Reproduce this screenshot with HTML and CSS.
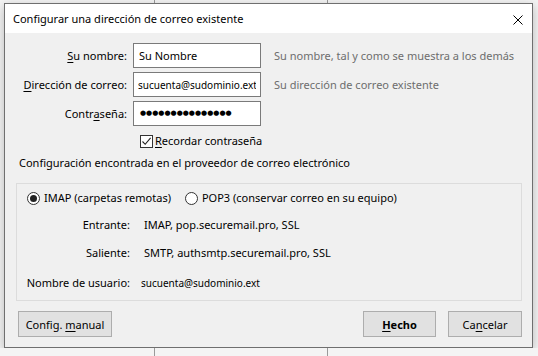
FILE: index.html
```html
<!DOCTYPE html>
<html lang="es">
  <head>
    <meta charset="UTF-8" />
    <meta name="viewport" content="width=device-width, initial-scale=1.0" />
    <title>Configurar una dirección de correo existente</title>
    <link rel="stylesheet" href="styles.css">
  </head>
  <body>
    <div class="backdrop">
      <div class="line line-a"></div>
      <div class="line line-b"></div>
    </div>

    <div class="dialog">
      <div class="titlebar">
        <span class="title">Configurar una dirección de correo existente</span>
        <svg class="close" width="10" height="10" viewBox="0 0 10 10">
          <path d="M0.5 0.5 L9.5 9.5 M9.5 0.5 L0.5 9.5" stroke="#000" stroke-width="1" fill="none" />
        </svg>
      </div>

      <div class="content">
        <div class="fields">
          <label class="label" for="name"><u>S</u>u nombre:</label>
          <input class="field" type="text" id="name" value="Su Nombre" />
          <span class="hint">Su nombre, tal y como se muestra a los demás</span>

          <label class="label" for="email"><u>D</u>irección de correo:</label>
          <input class="field small" type="text" id="email" value="sucuenta@sudominio.ext" />
          <span class="hint">Su dirección de correo existente</span>

          <label class="label" for="password">Contr<u>a</u>seña:</label>
          <div class="field dots" id="password">●●●●●●●●●●●●●●●</div>
          <span class="hint"></span>
        </div>

        <div class="remember">
          <span class="checkbox">
            <svg width="11" height="11" viewBox="0 0 11 11">
              <path d="M1.5 5.5 L4.2 8.3 L9.6 1.8" stroke="#222" stroke-width="1.1" fill="none" />
            </svg>
          </span>
          <span><u>R</u>ecordar contraseña</span>
        </div>

        <div class="section-title">Configuración encontrada en el proveedor de correo electrónico</div>

        <div class="group">
          <div class="radios">
            <span class="radio-item"><span class="radio checked"></span>IMAP (carpetas remotas)</span>
            <span class="radio-item"><span class="radio"></span>POP3 (conservar correo en su equipo)</span>
          </div>
          <div class="server-grid">
            <span class="label">Entrante:</span>
            <span class="value">IMAP, pop.securemail.pro, SSL</span>
            <span class="label">Saliente:</span>
            <span class="value">SMTP, authsmtp.securemail.pro, SSL</span>
            <span class="label user-label">Nombre de usuario:</span>
            <span class="value user">sucuenta@sudominio.ext</span>
          </div>
        </div>

        <div class="buttons">
          <button class="btn btn-manual">Config. <u>m</u>anual</button>
          <div class="spacer"></div>
          <button class="btn btn-done"><u>H</u>echo</button>
          <button class="btn btn-cancel">Ca<u>n</u>celar</button>
        </div>
      </div>
    </div>
  </body>
</html>
```

FILE: styles.css
```css
body {
  font-family: "Noto Sans", "Open Sans", sans-serif;
  font-size: 11px;
  line-height: 16px;
  margin: 0;
  padding: 3px 0 0 4px;
  background-color: #f0f0f0;
  color: #000;
  overflow: hidden;
}
u {
  text-decoration-thickness: 1px;
  text-underline-offset: 2px;
}
.backdrop {
  position: absolute;
  top: 0;
  left: 0;
  width: 538px;
  height: 356px;
  background-color: #f4f4f4;
}
.line {
  position: absolute;
  top: 0;
  width: 1px;
  height: 356px;
  background-color: #9a9a9a;
}
.line-a {
  left: 154px;
}
.line-b {
  left: 327px;
}
.dialog {
  position: relative;
  width: 529px;
  box-sizing: border-box;
  border: 1px solid #6f6f6f;
  background-color: #f0f0f0;
  box-shadow: 0 3px 10px rgba(0, 0, 0, 0.25);
}
.titlebar {
  height: 29px;
  background-color: #fff;
  display: flex;
  align-items: center;
  padding: 0 9px 0 8px;
}
.title {
  flex: 1;
  padding-top: 1px;
}
.close {
  margin-top: 2px;
}
.content {
  padding: 10px 10px 10px 0;
}
.fields {
  display: grid;
  grid-template-columns: 122px 128px 1fr;
  grid-auto-rows: 25px;
  column-gap: 6px;
  row-gap: 4px;
  align-items: center;
}
.label {
  text-align: right;
}
.field {
  height: 25px;
  box-sizing: border-box;
  border: 1px solid #7a7a7a;
  background-color: #fff;
  font-family: inherit;
  font-size: 11px;
  padding: 0 5px;
  margin: 0;
  color: #000;
  outline: none;
}
.field.small {
  font-size: 10px;
  padding: 0 4px;
}
.dots {
  font-family: "DejaVu Sans", sans-serif;
  font-size: 7px;
  line-height: 23px;
  letter-spacing: 0;
  padding: 0 6px;
}
.hint {
  color: #6d6d6d;
  padding-left: 7px;
  white-space: nowrap;
}
.remember {
  display: flex;
  align-items: center;
  gap: 2px;
  margin: 7px 0 0 135px;
  height: 16px;
}
.checkbox {
  width: 13px;
  height: 13px;
  box-sizing: border-box;
  border: 1px solid #333;
  background-color: #fff;
  display: flex;
  align-items: center;
  justify-content: center;
}
.section-title {
  margin: 6px 0 0 14px;
}
.group {
  margin: 12px 0 0 11px;
  border: 1px solid #dcdcdc;
  padding: 6px 0 9px 0;
}
.radios {
  display: flex;
  gap: 14px;
  padding-left: 10px;
}
.radio-item {
  display: flex;
  align-items: center;
  gap: 4px;
}
.radio {
  width: 13px;
  height: 13px;
  box-sizing: border-box;
  border: 1px solid #333;
  border-radius: 50%;
  background-color: #fff;
  display: flex;
  align-items: center;
  justify-content: center;
}
.radio.checked::after {
  content: "";
  width: 7px;
  height: 7px;
  border-radius: 50%;
  background-color: #222;
}
.server-grid {
  display: grid;
  grid-template-columns: 113px 1fr;
  column-gap: 14px;
  row-gap: 12px;
  margin-top: 11px;
}
.user-label {
  margin-top: 2px;
}
.value.user {
  font-size: 10px;
  margin-left: -3px;
  margin-top: 2px;
}
.buttons {
  display: flex;
  gap: 12px;
  margin: 10px 0 0 13px;
}
.spacer {
  flex: 1;
}
.btn {
  height: 26px;
  background-color: #e1e1e1;
  border: 1px solid #adadad;
  font-family: inherit;
  font-size: 11px;
  color: #000;
  padding: 0;
}
.btn-manual {
  width: 94px;
}
.btn-done {
  width: 73px;
  font-weight: bold;
}
.btn-cancel {
  width: 74px;
}
```
